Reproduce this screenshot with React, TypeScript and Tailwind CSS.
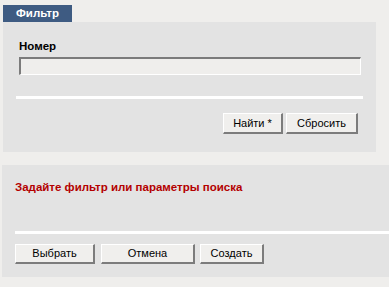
import React from 'react';

const btn =
  'h-[21px] bg-[#f0efed] border-t border-l border-t-white border-l-white border-b-2 border-r-2 border-b-[#7c7c7c] border-r-[#7c7c7c] text-[11px] font-normal text-black leading-none';

export default function App() {
  return (
    <div className="w-[389px] h-[287px] bg-[#efeeec] pt-[5px] font-['Liberation_Sans',Arial,sans-serif]">
      {/* filter tab */}
      <div className="ml-[3px] w-[69px] h-[17px] bg-[#3e5b82] pl-[13px] flex items-center">
        <span className="text-[11.5px] font-bold text-white">Фильтр</span>
      </div>

      {/* filter panel */}
      <div className="ml-[3px] w-[373px] bg-[#e3e3e3] pt-[18px] pb-[18px] pr-[18px]">
        <div className="pl-[16px] text-[11.5px] leading-[13px] font-bold text-black">Номер</div>
        <input
          className="block mt-[4px] ml-[16px] w-[342px] h-[18px] bg-[#efeeec] border-t-2 border-l-2 border-t-[#7b7b7b] border-l-[#7b7b7b] border-b border-r border-b-white border-r-white outline-none"
          type="text"
        />
        <div className="mt-[21px] ml-[13px] w-[347px] h-[3px] bg-white" />
        <div className="mt-[14px] flex justify-end gap-[3px]">
          <button className={`${btn} w-[60px]`}>Найти *</button>
          <button className={`${btn} w-[72px]`}>Сбросить</button>
        </div>
      </div>

      {/* results panel */}
      <div className="mt-[13px] ml-[2px] w-[387px] bg-[#e3e3e3] pt-[16px] pb-[13px]">
        <div className="pl-[13px] text-[11.5px] leading-[13px] font-bold text-[#b40000]">
          Задайте фильтр или параметры поиска
        </div>
        <div className="mt-[37px] ml-[13px] h-[3px] bg-white" />
        <div className="mt-[10px] ml-[13px] flex gap-[6px]">
          <button className={`${btn} !h-[20px] w-[80px]`}>Выбрать</button>
          <button className={`${btn} !h-[20px] w-[94px]`}>Отмена</button>
          <button className={`${btn} !h-[20px] w-[64px] -ml-[1px]`}>Создать</button>
        </div>
      </div>
    </div>
  );
}
